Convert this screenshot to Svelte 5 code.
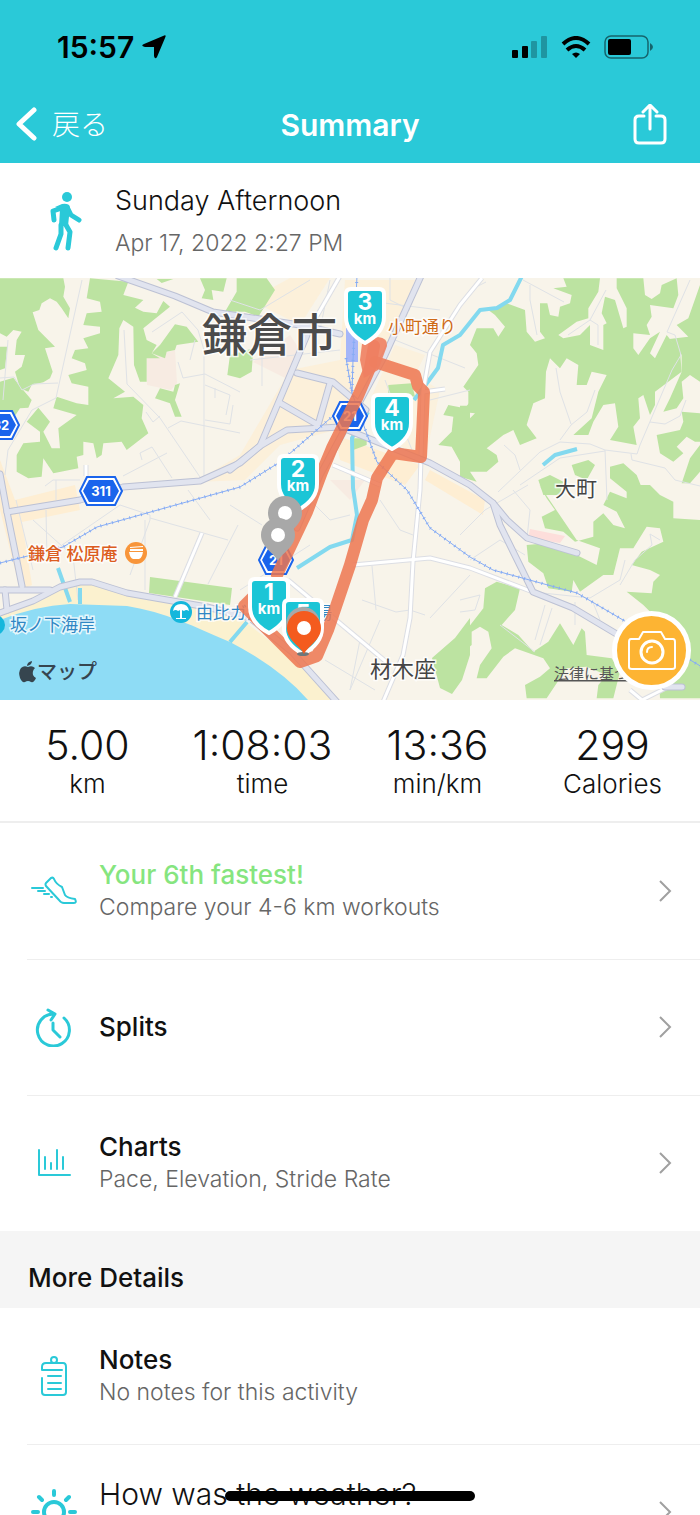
<script>
  const stats = [
    { value: '5.00', label: 'km' },
    { value: '1:08:03', label: 'time' },
    { value: '13:36', label: 'min/km' },
    { value: '299', label: 'Calories' },
  ];

  const rows = [
    { icon: 'shoe', title: 'Your 6th fastest!', sub: 'Compare your 4-6 km workouts', highlight: true },
    { icon: 'clock', title: 'Splits' },
    { icon: 'chart', title: 'Charts', sub: 'Pace, Elevation, Stride Rate' },
  ];

  const kmMarkers = [
    { n: 3, x: 365, y: 289 },
    { n: 4, x: 392, y: 395 },
    { n: 2, x: 298, y: 456 },
  ];

  const majorRoads = [
    'M118 276 L175 296 L213 312 L300 325 L340 334',
    'M0 474 L7 512 L22 586',
    'M7 512 L80 500 L123 487 L200 481 L240 463 L260 446 L287 430 L340 427 L410 455 L430 463 L470 485 L493 503 L507 520 L527 538 L577 553',
    'M493 503 L500 525 L533 592 L573 608 L630 642',
    'M421 276 L385 355 L320 475 L297 528',
    'M307 335 L260 446',
    'M297 373 L333 382 L366 410',
    'M280 403 L318 425 L330 383',
    'M230 470 L260 446',
    'M0 613 L33 601 L60 587 L80 582 L92 582 L127 593 L207 607 L250 618 L292 652 L337 702',
    'M0 590 L50 590',
    'M5 590 L7 610',
    'M665 687 L682 687',
  ];

  const whiteRoads = [
    'M340 276 L306 335',
    'M333 465 L380 485',
    'M482 278 L460 305 L430 352 L423 392 L420 490 L413 562 L410 618 L403 655 L383 702',
    'M353 565 L430 558 L470 568 L533 592',
    'M423 392 L445 389',
    'M288 580 L330 615 L390 665',
    'M202 533 L175 597',
    'M86 465 L86 476',
    'M630 690 L642 700 L668 687',
  ];

  const lanes = [
    'M82 280 L56 398 L32 410 L8 450 L5 475',
    'M124 330 L127 384 L160 418 L202 480',
    'M0 378 L14 377 L22 390 L34 384 L58 383',
    'M8 340 L3 400',
    'M152 332 L182 312 L198 330 L204 350 V478',
    'M178 362 L183 378 L205 374 L240 392',
    'M168 428 L181 421 L240 433',
    'M205 385 L230 395 L226 415 M215 388 V398 M205 420 L230 424 L233 405',
    'M123 476 L167 453 M142 460 L140 453 L152 447 L172 478',
    'M146 412 L153 422 L160 416 M190 360 L195 340',
    'M45 486 L53 480 L80 480 M56 480 V500',
    'M16 500 L33 570 M46 510 L47 560 M33 520 L73 556 L78 600',
    'M62 545 L120 505 L150 515 L150 520 L130 575 M145 590 V520',
    'M150 518 L228 540 M188 490 L210 520 M238 525 L208 584',
    'M230 300 L260 310 L310 280 M250 360 L340 350 M262 350 L262 386',
    'M330 280 L320 330 M360 300 L440 310 M390 278 V300 L410 310',
    'M395 340 L465 368 M385 380 L400 420 L412 450 M430 400 L470 390',
    'M230 505 L262 525 M240 590 L310 545 M310 500 L330 520 L350 515',
    'M380 500 L400 530 L413 535 M362 600 L396 612 L410 610 L425 615 M430 618 L470 575 M372 566 L376 610',
    'M300 590 L360 640 L350 690 M325 660 L375 690 M380 620 L350 690',
    'M470 290 L486 282 M523 280 L564 302 M530 285 L530 300 L537 335',
    'M556 368 L560 392 L571 424 M595 390 L587 412 L571 425 L560 440',
    'M560 442 L590 444 L605 450 L637 454 L640 445 L672 370 L681 355 L675 335 L667 332 L690 280',
    'M631 454 L632 460 L665 468 L675 480 L700 486 M605 450 L607 500',
    'M560 442 L540 452 L498 492 M520 485 L560 458 L605 451',
    'M504 445 L515 455 L520 470 M650 422 L665 424 L680 416 L686 400',
    'M590 320 L568 335 M590 320 L598 325 L598 345 M590 320 L606 290',
    'M460 535 L485 510 L528 485 M470 560 L500 540 L525 555',
    'M527 538 L530 510 L513 490 M533 592 L590 598 L620 580 L625 560',
    'M545 605 L535 640 M552 608 L540 645 M575 602 V625 M592 600 L600 620',
    'M460 600 L480 595 L475 610 L460 612 M500 625 L535 652',
    'M620 585 L635 560 L652 545 L650 534 L660 540',
  ];

  const railways = [
    'M0 563 L63 547 L97 527 L240 487 L280 462 L333 416',
    'M357 276 L353 360 L352 393 L377 462 L407 490 L430 528 L470 557 L493 570 L577 593 L623 620 L702 667',
    'M346 358 L352 393',
  ];

  const streams = [
    'M522 276 L510 300 L497 308 L480 310 L460 335 L443 345 L438 368 L427 383 L414 400',
    'M368 412 L352 438 L353 488 L357 515 L352 540 L330 547 L297 568',
    'M58 568 L70 602 M80 588 V604 M247 622 L230 642',
    'M543 465 L555 455 L577 449',
  ];
</script>

{#snippet hex(x, y, label, w)}
  <g transform="translate({x} {y})">
    <path class="hex" d="M{-w + 7} -14 H{w - 7} L{w} 0 L{w - 7} 14 H{-w + 7} L{-w} 0Z" />
    <path class="hex-line" d="M{-w + 9} -11 H{w - 9} L{w - 3} 0 L{w - 9} 11 H{-w + 9} L{-w + 3} 0Z" />
    <text class="hex-text" y="5">{label}</text>
  </g>
{/snippet}

{#snippet km(x, y, n)}
  <g transform="translate({x} {y})">
    <path class="shield" d="M-14 0 H14 Q19 0 19 5 V28 C19 40 11 48 0 54 C-11 48 -19 40 -19 28 V5 Q-19 0 -14 0Z" />
    <text class="km-num" y="21">{n}</text>
    <text class="km-unit" y="35">km</text>
  </g>
{/snippet}

{#snippet pin(x, y, color)}
  <g transform="translate({x} {y})">
    <path fill={color} d="M0 26 C-4 18 -17 12 -17 0 A17 17 0 1 1 17 0 C17 12 4 18 0 26Z" />
    <circle r="7" fill="#fff" />
  </g>
{/snippet}

{#snippet chevron()}
  <svg class="chevron" viewBox="0 0 14 24" aria-hidden="true"><path d="M2 2 L12 12 L2 22" /></svg>
{/snippet}

<div class="page">
  <header>
    <div class="status">
      <div class="time">
        <span>15:57</span>
        <svg width="24" height="24" viewBox="0 0 24 24" aria-hidden="true">
          <path d="M21 1 Q25 -1 23 3 L15 22 Q13 25 12 21 V12 H3 Q-2 11 2 9Z" />
        </svg>
      </div>
      <div class="signals">
        <svg width="36" height="22" viewBox="0 0 36 22" aria-hidden="true">
          <rect x="0" y="14" width="6" height="8" rx="1" />
          <rect x="10" y="10" width="6" height="12" rx="1" />
          <g opacity=".25">
            <rect x="19" y="5" width="6" height="17" rx="1" />
            <rect x="29" y="0" width="6" height="22" rx="1" />
          </g>
        </svg>
        <svg width="30" height="23" viewBox="0 0 30 23" aria-hidden="true">
          <path d="M2 8 Q15 -4 28 8" fill="none" stroke="#000" stroke-width="4" />
          <path d="M6 14 Q15 6 24 14" fill="none" stroke="#000" stroke-width="4" />
          <path d="M11 18 Q15 15 19 18 L15 22Z" />
        </svg>
        <svg width="49" height="24" viewBox="0 0 49 24" aria-hidden="true">
          <rect x="1" y="1" width="43" height="22" rx="6" fill="none" stroke="#000" stroke-opacity=".5" stroke-width="1.5" />
          <rect x="4" y="4" width="23" height="16" rx="2" />
          <path d="M46 8 Q49 10 49 12 Q49 14 46 16Z" opacity=".5" />
        </svg>
      </div>
    </div>
    <nav>
      <button class="back">
        <svg width="22" height="36" viewBox="0 0 22 36" aria-hidden="true"><path d="M18 3 L3 17 L18 31" /></svg>
        <span>戻る</span>
      </button>
      <h1>Summary</h1>
      <button class="share" aria-label="Share">
        <svg width="34" height="42" viewBox="0 0 34 42" aria-hidden="true">
          <path d="M11 12 H6 Q2 12 2 16 V35 Q2 39 6 39 H28 Q32 39 32 35 V16 Q32 12 28 12 H23 M17 25 V1 M10 8 L17 1 L24 8" />
        </svg>
      </button>
    </nav>
  </header>

  <section class="activity">
    <svg width="32" height="60" viewBox="0 0 32 60" aria-hidden="true">
      <circle cx="17" cy="5" r="5" />
      <path class="limb" d="M12 16 L3 19 L4 28 M18 17 L21 23 L29 28 M11 33 L11 42 L6 56 M16 33 L20 40 L18 56" />
      <path d="M5 15 L12 12 Q19 11 20 15 L18 34 H9 L10 17Z" />
    </svg>
    <div>
      <h2>Sunday Afternoon</h2>
      <p>Apr 17, 2022 2:27 PM</p>
    </div>
  </section>

  <section class="map">
    <svg class="canvas" viewBox="0 278 700 422" role="img" aria-label="Route map">
      <rect y="278" width="700" height="422" fill="#f8f4ea" />

      <g fill="#feeed3">
        <path d="M0 460 L15 500 L75 485 L80 510 L22 522 L32 585 L20 590 L0 510Z" />
        <path d="M195 482 L240 455 L290 370 L340 360 L345 280 H415 L385 355 L335 430 L280 445 L245 480Z" opacity=".7" />
        <path d="M250 300 L290 278 H330 L300 325Z" opacity=".7" />
        <path d="M335 435 L420 465 L405 485 L340 460Z M430 470 L485 500 L483 515 L425 480Z" />
        <path d="M395 345 L425 355 L415 375 L440 390 L425 460 L390 440 L370 400Z" opacity=".6" />
      </g>
      <g fill="#f7ebe2">
        <path d="M147 358 L175 350 L177 383 L171 390 L147 385Z" />
        <path d="M253 362 L290 335 L300 350 L285 378Z M330 480 L365 480 L350 500Z" />
      </g>
      <path fill="#fddedb" d="M530 529 L565 536 L560 543 L528 538Z" />

      <!-- woodland, drawn per tile at triple scale -->
      <g class="wood">
        <g transform="translate(0 275) scale(.33333)">
          <path d="M0 10 L190 10 L195 35 L190 65 L210 100 L205 130 L185 100 L170 80 L150 70 L125 85 L118 105 L98 112 L115 165 L165 215 L135 220 L158 290 L150 310 L130 322 L95 330 L85 350 L60 340 L45 290 L65 275 L75 240 L45 240 L50 195 L65 170 L40 165 L20 185 L0 175Z" />
          <path d="M0 215 H22 L15 280 L0 285Z M0 320 L40 308 L65 340 L95 375 L85 398 L60 400 L40 430 L0 410Z" />
          <path d="M265 40 L270 10 L385 20 L370 60 L430 75 L405 98 L430 110 L470 115 L490 78 L510 95 L430 160 L440 195 L470 210 L455 235 L480 250 L440 250 L440 320 L420 320 L402 270 L400 155 L370 135 L358 160 L355 240 L325 310 L375 350 L340 370 L400 365 L430 390 L425 430 L445 475 L380 525 L365 500 L310 505 L305 540 L290 550 L280 505 L250 500 L250 540 L230 545 L235 580 L160 595 L130 550 L125 605 L85 610 L50 590 L50 540 L70 505 L120 500 L120 470 L80 440 L115 398 L150 440 L130 470 L155 520 L180 520 L175 460 L230 420 L160 400 L170 365 L230 385 L265 390 L265 335 L215 325 L205 300 L260 285 L255 265 L215 250 L225 225 L265 220 L250 190 L300 175 V155 L250 150 L260 115 L305 110 L300 80 L260 70Z" />
          <path d="M455 235 L480 210 L525 148 L560 155 L595 200 L530 210 L525 225 L500 230 L495 250Z" />
          <path d="M465 370 L480 340 L520 350 L525 330 L540 325 L525 375 L545 425 L525 425 L510 385Z" />
          <path d="M600 10 H680 L670 50 L635 45 L640 75 L605 70 L615 45Z M470 12 L520 12 L485 24Z" />
        </g>
        <g transform="translate(230 275) scale(.33333)">
          <path d="M20 10 H110 L135 45 L85 125 L45 110 L-15 110 L20 50Z M0 240 L70 220 L65 290 L30 310 L-8 300Z" />
          <path d="M475 330 L545 325 L555 365 L475 355Z M365 490 H410 V510 L370 525Z" />
          <path d="M720 380 L705 400 L655 390 L640 420 L670 425 L665 470 L625 510 L665 515 L690 560 L720 600Z" />
        </g>
        <g transform="translate(460 275) scale(.33333)">
          <path fill-rule="evenodd" d="M85 105 L140 85 L195 105 L200 170 L225 200 L255 190 L240 170 V85 H262 L270 120 L295 125 L300 95 L330 85 L335 60 L280 40 L320 35 L310 10 H420 L415 50 L385 100 L385 130 L350 140 L295 180 L310 190 L360 180 L390 150 V210 L430 225 V150 L440 145 L425 115 L435 65 L465 75 L490 160 L500 155 V100 L470 40 V10 H550 L555 60 L575 72 L600 55 L605 30 L650 10 L655 60 L640 100 L570 90 L575 125 L560 150 L570 180 L520 175 V220 L535 240 L570 190 L600 170 L570 235 L585 250 L620 180 L660 230 L665 290 L585 350 V390 L570 420 L550 360 L535 370 L540 430 L520 455 L530 510 L450 495 L475 455 L465 385 L430 390 L400 440 L385 480 L340 480 L395 430 L415 350 L440 300 L395 290 L380 330 H350 L355 270 L320 250 L300 280 L270 250 L258 290 L255 370 L220 385 L200 450 L230 490 L180 510 L160 465 L130 480 L80 520 L110 540 L115 560 L80 590 L30 590 L50 620 L0 605 V460 L45 415 L0 410 V392 H25 V350 L10 335 L55 270 L50 235 L30 210 L50 160 L100 160 L115 185 L135 155 L105 120Z" />
          <path d="M720 30 L685 130 L650 150 L685 185 L628 192 L665 240 L665 290 L630 370 L610 410 L650 400 L670 370 L665 320 L690 300 L720 320Z" />
          <path d="M590 480 L660 465 L670 440 L665 410 L720 415 V500 L705 500 L680 485 L650 515 L670 535 L640 560 L600 535Z M720 510 L690 550 L665 625 L690 625 L720 590Z" />
          <path d="M335 570 L385 555 L405 570 L380 615 L345 600Z M450 575 L490 565 L530 600 L550 650 H500 L450 610Z M235 615 L270 600 L310 620 L300 660 H250Z" />
        </g>
        <g transform="translate(460 485) scale(.33333)">
          <path d="M238 0 L260 40 L285 75 L245 95 L255 130 L310 140 L345 170 L400 155 V110 L430 85 L460 120 L495 130 L470 80 L430 60 L450 20 L500 40 L500 0 H570 L600 30 L640 50 V100 L720 105 V640 H600 L590 400 L550 360 L500 320 L575 325 L580 290 L600 270 L570 255 L515 240 L545 200 L610 170 L600 130 L560 125 L520 190 L480 190 L460 270 L430 270 L360 320 L340 285 L335 320 L265 310 L250 265 L205 230 L200 180 L260 175 L350 210 L410 240 L420 190 L350 165Z" />
          <path d="M110 290 L180 310 L165 375 L125 420 L175 450 L220 500 L265 470 L300 415 L340 480 L365 430 L375 440 L380 510 L455 520 L480 560 L460 640 H410 L415 600 L440 570 L380 545 L320 550 L260 640 L200 640 L195 600 L240 575 L270 550 L250 520 L165 490 L130 515 L80 580 L50 580 L60 540 L95 490 L85 440 L60 425 L35 440 V480 L0 510 V460 L70 370 L75 310Z" />
        </g>
        <path d="M470 618 L455 638 L432 658 L440 688 L452 694 L462 680 L470 655Z" />
        <path d="M150 577 L232 588 L230 605 L149 593Z" />
      </g>

      <path fill="#fbf1cf" d="M0 613 L33 601 L60 587 L92 582 L127 593 L207 610 L240 618 L292 658 L334 700 H0Z" />
      <path fill="#8edcf5" d="M0 620 Q35 606 70 604 L127 606 C165 612 195 627 230 642 Q280 668 308 700 H0Z" />

      {#each lanes as d}<path class="lane" {d} />{/each}
      {#each streams as d}<path class="stream" {d} />{/each}
      {#each whiteRoads as d}<path class="white-edge" {d} />{/each}
      {#each whiteRoads as d}<path class="white-road" {d} />{/each}
      {#each majorRoads as d}<path class="road-edge" {d} />{/each}
      {#each majorRoads as d}<path class="road" {d} />{/each}
      <rect x="346" y="328" width="12" height="34" fill="#a5b6f8" />
      {#each railways as d}
        <path class="rail" {d} />
        <path class="rail-ties" {d} />
      {/each}

      {@render hex(101, 491, '311', 21)}
      {@render hex(1, 425, '32', 18)}
      {@render hex(350, 416, '21', 17)}
      {@render hex(276, 560, '21', 17)}

      <g class="labels">
        <text x="202" y="352" font-size="45" font-weight="500" fill="#4b4b4b">鎌倉市</text>
        <text x="388" y="333" font-size="17" fill="#cf6a16">小町通り</text>
        <text x="555" y="496" font-size="21" fill="#444">大町</text>
        <text x="370" y="677" font-size="22" fill="#444">材木座</text>
        <text x="28" y="560" font-size="17" font-weight="500" fill="#dc5c20">鎌倉 松原庵</text>
        <text x="10" y="631" font-size="17" fill="#2f87c4">坂ノ下海岸</text>
        <text x="196" y="619" font-size="17" fill="#2f87c4">由比ガ浜海水浴場</text>
      </g>

      <circle cx="136" cy="553" r="11" fill="#f8953a" />
      <path fill="#fff" d="M129 552 H143 Q142 558 139 559 H133 Q130 558 129 552Z M130 547 L143 546 V547 L130 548Z M130 549 H143 V551 H130Z" />
      <circle cx="181" cy="612" r="11" fill="#15b7dc" />
      <path fill="#fff" d="M173 611 Q174 604 181 604 Q188 604 189 611 Q186 609 184 611 Q181 609 178 611 Q176 609 173 611Z M180 610 H182 V618 H180Z M176 618 H186 V619 H176Z" />
      <circle cx="-5" cy="625" r="10" fill="#15b7dc" />

      <g fill="#36454f">
        <path d="M28 667 Q32 665 35 668 Q32 671 33 675 Q34 677 36 678 Q34 683 31 682 Q28 680 25 682 Q22 683 20 678 Q18 672 21 668 Q24 665 28 667Z M27 666 Q27 662 32 661 Q32 665 27 666Z" />
        <text x="37" y="679" font-size="20" font-weight="500">マップ</text>
      </g>
      <a href="#legal"><text class="legal" x="554" y="679">法律に基づく情報</text></a>

      <path class="route" d="M277 575 L307 512 L322 472 L332 448 L347 418 L358 396 L370 368 L374 346" />
      <path class="route" d="M375 362 L415 375 L418 386 L424 392 L422 436 L421 457 L393 453 L377 478 L372 500 L363 520 L350 565 L328 630 L317 656 L300 662 L244 606 L262 588" />
      <path fill="#ee8062" opacity=".9" d="M362 344 L378 337 Q388 338 387 346 L378 370 L364 378 L360 360Z" />

      {#each kmMarkers as m}{@render km(m.x, m.y, m.n)}{/each}
      {@render pin(285, 513, '#a8a8a8')}
      {@render pin(278, 535, '#a8a8a8')}
      {@render km(269, 579, 1)}
      {@render km(303, 600, 5)}
      <ellipse cx="303" cy="654" rx="6" ry="2" fill="#6f777a" />
      {@render pin(303, 624, '#a8a8a8')}
      {@render pin(304, 628, '#f45b1e')}
    </svg>

    <button class="camera" aria-label="Add photo">
      <svg width="50" height="42" viewBox="0 0 50 42" aria-hidden="true">
        <path d="M4 9 H12 L16 2 H34 L38 9 H46 Q48 9 48 12 V37 Q48 39 45 39 H5 Q2 39 2 37 V12 Q2 9 4 9Z" />
        <circle cx="25" cy="22" r="11" />
        <path d="M20 22 Q20 17 25 17" />
      </svg>
    </button>
  </section>

  <section class="stats">
    {#each stats as s}
      <div>
        <strong>{s.value}</strong>
        <span>{s.label}</span>
      </div>
    {/each}
  </section>

  <section class="list">
    {#each rows as row}
      <button class="row">
        <span class="icon">
          {#if row.icon === 'shoe'}
            <svg width="46" height="30" viewBox="0 0 46 30" aria-hidden="true">
              <path d="M15 7 L20 2 Q22 1 23 3 Q25 8 31 11 L34 19 Q36 22 44 23 Q46 27 43 27 H33 Q30 27 28 24 L15 10 Q14 8 15 7Z M1 12 H12 M7 15 H14 M13 18 H18 M20 21 H21" />
            </svg>
          {:else if row.icon === 'clock'}
            <svg width="38" height="40" viewBox="0 0 38 40" aria-hidden="true">
              <path class="bold" d="M29 11 A16 16 0 1 1 19 7 M13 3 L20 7 L16 13 M18 16 V23 L25 30" />
            </svg>
          {:else}
            <svg width="34" height="28" viewBox="0 0 34 28" aria-hidden="true">
              <path d="M2 1 V26 H33 M8 8 V20 M14 14 V20 M20 1 V20 M26 8 V20" />
            </svg>
          {/if}
        </span>
        <span class="text">
          <span class="title" class:highlight={row.highlight}>{row.title}</span>
          {#if row.sub}<span class="sub">{row.sub}</span>{/if}
        </span>
        {@render chevron()}
      </button>
    {/each}
  </section>

  <h3>More Details</h3>

  <section class="list">
    <button class="row">
      <span class="icon">
        <svg width="28" height="42" viewBox="0 0 28 42" aria-hidden="true">
          <path d="M2 15 V12 Q2 8 6 8 H23 Q26 8 26 12 V37 Q26 40 23 40 H5 Q2 40 2 37 V23 M2 15 H22 M8 21 H21 M8 28 H21 M8 34 H21" />
          <circle cx="14" cy="5" r="3" />
        </svg>
      </span>
      <span class="text">
        <span class="title">Notes</span>
        <span class="sub">No notes for this activity</span>
      </span>
    </button>
    <button class="row weather">
      <span class="icon">
        <svg width="48" height="48" viewBox="0 0 48 48" aria-hidden="true">
          <circle class="sun" cx="24" cy="24" r="10" />
          <path class="sun" d="M24 3 V7 M24 41 V45 M3 24 H8 M40 24 H45 M9 9 L12 12 M39 9 L36 12 M9 39 L12 36 M39 39 L36 36" />
        </svg>
      </span>
      <span class="text"><span class="question">How was the weather?</span></span>
      {@render chevron()}
    </button>
  </section>

  <div class="home-indicator"></div>
</div>

<style>
  :global(body) { background: #fff; }
  .page {
    position: relative;
    height: 100vh;
    overflow: hidden;
    font-family: Inter, "Noto Sans CJK JP", sans-serif;
    font-weight: 300;
    color: #111;
  }
  h1, h2, h3, p { margin: 0; }
  button {
    background: none; border: 0; padding: 0;
    font: inherit; color: inherit; text-align: left;
    cursor: pointer;
  }
  svg { display: block; flex: none; }

  header { background: #2ac9d8; }
  .status {
    display: flex; justify-content: space-between; align-items: center;
    height: 86px;
    padding: 8px 47px 0 57px;
    box-sizing: border-box;
    color: #000;
  }
  .time { display: flex; align-items: center; gap: 8px; font-size: 30px; font-weight: 600; }
  .signals { display: flex; align-items: center; gap: 13px; }
  nav {
    display: grid; grid-template-columns: 1fr auto 1fr; align-items: center;
    height: 77px;
    padding: 0 33px 0 16px;
    color: #fff;
  }
  nav svg { fill: none; stroke: #fff; stroke-width: 3; stroke-linecap: round; stroke-linejoin: round; }
  .back { display: flex; align-items: center; gap: 14px; font-size: 28px; line-height: 40px; }
  .back svg { stroke-width: 5; }
  h1 { font-size: 30px; line-height: 40px; font-weight: 600; margin-left: 17px; }
  .share { justify-self: end; }

  .activity {
    display: flex; align-items: center; gap: 33px;
    height: 115px;
    padding: 2px 50px 0;
    box-sizing: border-box;
  }
  .activity svg { fill: #2ac9d8; }
  .limb { fill: none; stroke: #2ac9d8; stroke-width: 5; stroke-linecap: round; stroke-linejoin: round; }
  h2 { font-size: 27px; line-height: 42px; font-weight: 300; }
  .activity p { font-size: 23px; line-height: 42px; color: #666; }

  .map { position: relative; }
  .canvas { width: 100%; height: auto; }
  .wood { fill: #bce3a1; }
  .lane, .stream, .white-edge, .white-road, .road-edge, .road, .rail, .rail-ties, .route {
    fill: none; stroke-linejoin: round;
  }
  .lane { stroke: #dfe2e6; stroke-width: 1; }
  .stream { stroke: #83d9ef; stroke-width: 4; }
  .white-edge { stroke: #dcdee4; stroke-width: 5; }
  .white-road { stroke: #fff; stroke-width: 3; }
  .road-edge { stroke: #bcc1d4; stroke-width: 7; stroke-linecap: round; }
  .road { stroke: #e1e4ef; stroke-width: 5; stroke-linecap: round; }
  .rail { stroke: #86acf5; stroke-width: 1; }
  .rail-ties { stroke: #86acf5; stroke-width: 3; stroke-dasharray: 1 5; }
  .route { stroke: #ed7550; stroke-opacity: .85; stroke-width: 12; stroke-linecap: round; }
  .labels text { stroke: #fff; stroke-opacity: .8; stroke-width: 3; paint-order: stroke; font-weight: 400; }
  .labels text[font-weight] { font-weight: 500; }
  .legal { font-size: 15px; font-weight: 400; fill: #555; text-decoration: underline; }
  .hex { fill: #fff; stroke: #1a64ec; stroke-width: 2; }
  .hex-line { fill: #1a64ec; }
  .hex-text { font-size: 13px; font-weight: 700; fill: #fff; text-anchor: middle; }
  .shield { fill: #1bc5d6; stroke: #fff; stroke-width: 4; stroke-linejoin: round; }
  .km-num, .km-unit { fill: #fff; font-weight: 700; text-anchor: middle; }
  .km-num { font-size: 23px; }
  .km-unit { font-size: 15px; }
  .camera {
    position: absolute; right: 9px; bottom: 10px;
    display: flex; align-items: center; justify-content: center;
    width: 79px; height: 79px;
    background: #fdb433;
    border: 5px solid #fff;
    border-radius: 50%;
    box-sizing: border-box;
  }
  .camera svg { fill: none; stroke: #fff; stroke-width: 2; stroke-linejoin: round; stroke-linecap: round; }
  .camera circle { stroke-width: 3; }

  .stats {
    display: grid; grid-template-columns: repeat(4, 1fr);
    height: 123px;
    padding-top: 22px;
    box-sizing: border-box;
    border-bottom: 2px solid #eee;
    text-align: center;
  }
  .stats strong { display: block; font-size: 41px; line-height: 46px; font-weight: 300; }
  .stats span { display: block; font-size: 26px; line-height: 32px; }

  .row {
    position: relative;
    display: flex; align-items: center;
    width: 100%; height: 136px;
    padding: 0 28px 0 26px;
  }
  .row + .row::before {
    content: '';
    position: absolute; top: 0; left: 27px; right: 0;
    height: 1px;
    background: #eee;
  }
  .icon { display: flex; justify-content: center; width: 56px; margin-right: 17px; }
  .icon svg { fill: none; stroke: #2ac9d8; stroke-width: 2; stroke-linecap: round; stroke-linejoin: round; }
  .icon .bold { stroke-width: 3; }
  .icon .sun { stroke-width: 4; }
  .text { flex: 1; }
  .title, .sub { display: block; }
  .title { font-size: 26px; line-height: 32px; font-weight: 500; color: #111; }
  .title.highlight { color: #86e57f; }
  .sub { font-size: 23px; line-height: 32px; color: #666; }
  .chevron { width: 14px; height: 24px; fill: none; stroke: #a0a0a0; stroke-width: 2; }
  .question { font-size: 30px; line-height: 36px; }
  .weather .text { align-self: flex-start; padding-top: 32px; }

  h3 {
    height: 77px;
    padding: 16px 28px 0;
    box-sizing: border-box;
    background: #f5f5f5;
    font-size: 26px; line-height: 62px; font-weight: 500;
  }
  .home-indicator {
    position: absolute; left: 50%; bottom: 14px;
    width: 250px; height: 10px;
    margin-left: -125px;
    border-radius: 5px;
    background: #000;
  }
</style>
